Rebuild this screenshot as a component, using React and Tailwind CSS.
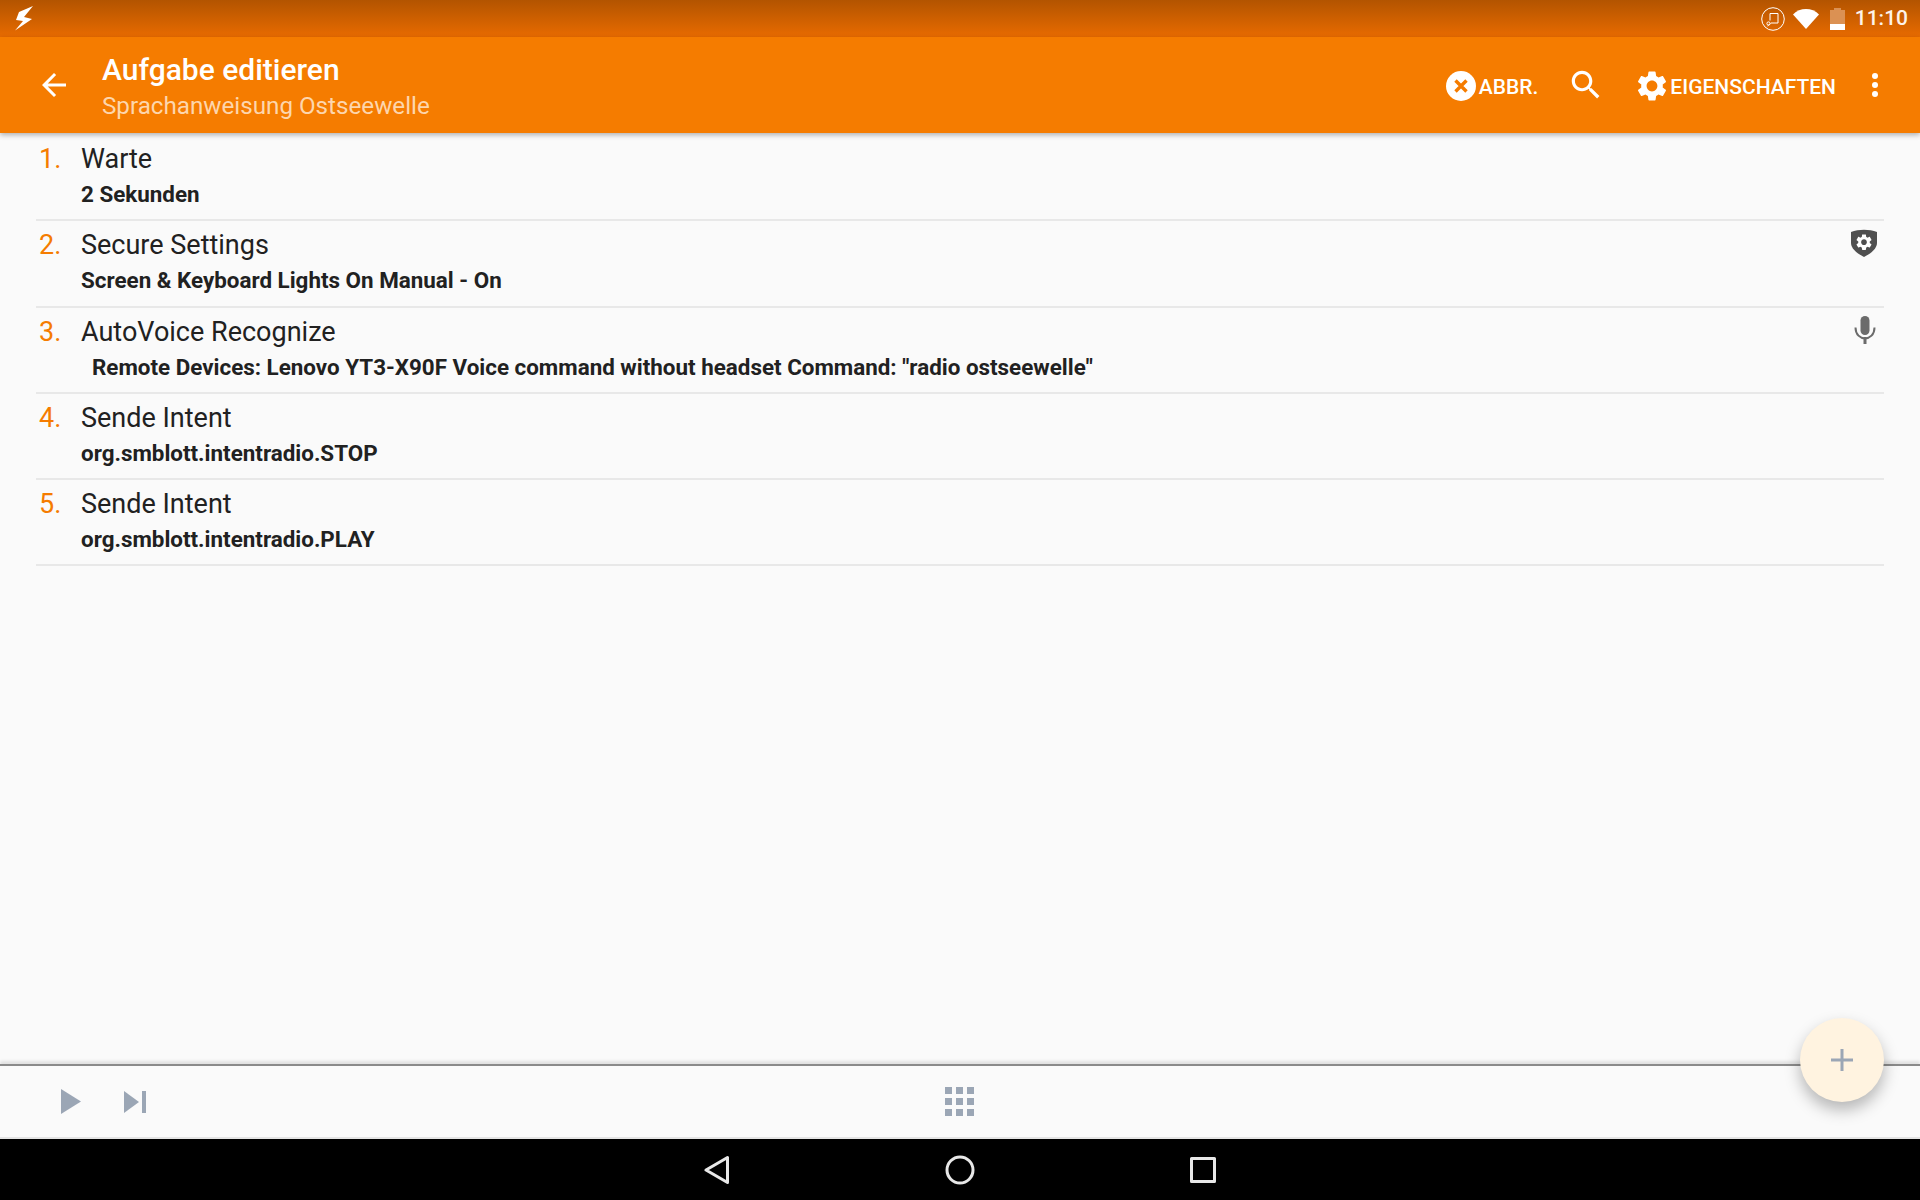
import React from 'react'

const actions = [
  { name: 'Warte', detail: '2 Sekunden' },
  { name: 'Secure Settings', detail: 'Screen & Keyboard Lights On Manual - On', icon: 'shield' },
  {
    name: 'AutoVoice Recognize',
    detail: 'Remote Devices: Lenovo YT3-X90F Voice command without headset Command: "radio ostseewelle"',
    indent: true,
    icon: 'mic',
  },
  { name: 'Sende Intent', detail: 'org.smblott.intentradio.STOP' },
  { name: 'Sende Intent', detail: 'org.smblott.intentradio.PLAY' },
]

const gearPath =
  'M19.14 12.94c.04-.3.06-.61.06-.94 0-.32-.02-.64-.07-.94l2.03-1.58c.18-.14.23-.41.12-.61l-1.92-3.32c-.12-.22-.37-.29-.59-.22l-2.39.96c-.5-.38-1.03-.7-1.62-.94l-.36-2.54c-.04-.24-.24-.41-.48-.41h-3.84c-.24 0-.43.17-.47.41l-.36 2.54c-.59.24-1.13.57-1.62.94l-2.39-.96c-.22-.08-.47 0-.59.22L2.74 8.87c-.12.21-.08.47.12.61l2.03 1.58c-.05.3-.09.63-.09.94s.02.64.07.94l-2.03 1.58c-.18.14-.23.41-.12.61l1.92 3.32c.12.22.37.29.59.22l2.39-.96c.5.38 1.03.7 1.62.94l.36 2.54c.05.24.24.41.48.41h3.84c.24 0 .44-.17.47-.41l.36-2.54c.59-.24 1.13-.56 1.62-.94l2.39.96c.22.08.47 0 .59-.22l1.92-3.32c.12-.22.07-.47-.12-.61l-2.01-1.58zM12 15.6c-1.98 0-3.6-1.62-3.6-3.6s1.62-3.6 3.6-3.6 3.6 1.62 3.6 3.6-1.62 3.6-3.6 3.6z'

function StatusBar() {
  return (
    <div className="h-[37px] shrink-0 flex items-center bg-gradient-to-b from-[#b35400] to-[#e86b00] pl-[15px] pr-[12px]">
      <svg width="18" height="25" viewBox="0 0 18 25" fill="#fff">
        <path d="M18 0 L4 6 L1 14 L8 15 L0 24.5 L17 13 L9 11 Z" />
      </svg>
      <div className="ml-auto flex items-center">
        <svg width="24" height="24" viewBox="0 0 24 24" fill="none" stroke="#fff" strokeWidth="1">
          <circle cx="12" cy="12" r="11.3" />
          <path d="M9 6.5h8v9.5h-7M9 6.5v7M9.5 16.5l-3 2.5" />
          <circle cx="7.5" cy="16.5" r="1.6" />
        </svg>
        <svg className="ml-[8px]" width="26" height="20" viewBox="0 0 26 20" fill="#fff">
          <path d="M0 5.5 C7 -1.8 19 -1.8 26 5.5 L13 20 Z" />
        </svg>
        <div className="ml-[11px] w-[15px] h-[22px] flex flex-col items-center">
          <div className="w-[7px] h-[2px] bg-[#db9153]" />
          <div className="w-[15px] flex-1 bg-[#db9153]" />
          <div className="w-[15px] h-[6px] bg-white" />
        </div>
        <span className="ml-[10px] text-[21px] font-medium text-[#fdf3ea] leading-none">11:10</span>
      </div>
    </div>
  )
}

function Toolbar() {
  return (
    <div className="relative z-10 h-[96px] shrink-0 flex items-center bg-[#f57c00] text-white shadow-[0_2px_5px_rgba(0,0,0,0.3)]">
      <svg className="ml-[36px] shrink-0" width="36" height="36" viewBox="0 0 24 24" fill="#fff">
        <path d="M20 11H7.83l5.59-5.59L12 4l-8 8 8 8 1.41-1.41L7.83 13H20v-2z" />
      </svg>
      <div className="ml-[30px] flex flex-col">
        <span className="text-[30px] font-medium leading-[42px]">Aufgabe editieren</span>
        <span className="text-[24.2px] leading-[30px] text-[#fdd6ad]">Sprachanweisung Ostseewelle</span>
      </div>
      <div className="ml-auto flex items-center">
        <svg className="mt-[2px]" width="30" height="30" viewBox="0 0 30 30">
          <circle cx="15" cy="15" r="15" fill="#fff" />
          <path d="M9.5 9.5l11 11M20.5 9.5l-11 11" stroke="#f57c00" strokeWidth="3.4" />
        </svg>
        <span className="ml-[3px] mt-[5px] text-[21px] font-medium">ABBR.</span>
        <svg className="ml-[29px]" width="38" height="38" viewBox="0 0 24 24" fill="#fff">
          <path d="M15.5 14h-.79l-.28-.27C15.41 12.59 16 11.11 16 9.5 16 5.91 13.09 3 9.5 3S3 5.91 3 9.5 5.91 16 9.5 16c1.61 0 3.09-.59 4.23-1.57l.27.28v.79l5 4.99L20.49 19l-4.99-5zm-6 0C7.01 14 5 11.99 5 9.5S7.01 5 9.5 5 14 7.01 14 9.5 11.99 14 9.5 14z" />
        </svg>
        <svg className="ml-[29px] mt-[1px]" width="36" height="36" viewBox="0 0 24 24" fill="#fff">
          <path d={gearPath} />
        </svg>
        <span className="mt-[5px] text-[21px] font-medium">EIGENSCHAFTEN</span>
        <svg className="ml-[21px] mr-[27px]" width="36" height="36" viewBox="0 0 24 24" fill="#fff">
          <circle cx="12" cy="6" r="2" />
          <circle cx="12" cy="12" r="2" />
          <circle cx="12" cy="18" r="2" />
        </svg>
      </div>
    </div>
  )
}

function ActionIcon({ type }) {
  if (type === 'shield') {
    return (
      <svg width="28" height="28" viewBox="0 0 28 28">
        <path d="M1 3 C9 0 19 0 27 3 L27 14 C27 20 20 25 14 28 C8 25 1 20 1 14 Z" fill="#4f4f4f" />
        <g transform="translate(4.4 3.6) scale(0.8)">
          <path d={gearPath} fill="#fff" />
        </g>
      </svg>
    )
  }
  return (
    <svg width="24" height="28" viewBox="0 0 24 28" fill="#6b6b6b">
      <rect x="7.5" y="0" width="9" height="19" rx="4.5" />
      <path d="M2.5 11.5 C2.5 26 21.5 26 21.5 11.5" fill="none" stroke="#6b6b6b" strokeWidth="2" />
      <rect x="10.5" y="21" width="3" height="7" />
    </svg>
  )
}

function ActionRow({ index, action }) {
  return (
    <div className="relative h-[86.25px] border-b-2 border-[#e8e8e8] flex">
      <span className="w-[45px] pl-[3px] pt-[5px] text-[27px] leading-[38px] text-[#f57c00]">{index}.</span>
      <div className="flex flex-col">
        <span className="pt-[5px] text-[27px] leading-[38px] text-[#212121]">{action.name}</span>
        <span className={`pt-[1px] text-[22.4px] font-bold leading-[31px] text-[#212121] ${action.indent ? 'ml-[11px]' : ''}`}>
          {action.detail}
        </span>
      </div>
      {action.icon && (
        <div className={`ml-auto pt-[8px] ${action.icon === 'mic' ? 'mr-[7px]' : 'mr-[6px]'}`}>
          <ActionIcon type={action.icon} />
        </div>
      )}
    </div>
  )
}

function BottomBar() {
  return (
    <div className="h-[75px] shrink-0 flex items-center relative bg-[#fafafa] border-t-2 border-[#8a8a8a] border-b-2 border-b-[#e4e4e4] shadow-[0_-3px_3px_rgba(0,0,0,0.1)]">
      <svg className="ml-[61px]" width="20" height="25" viewBox="0 0 20 25" fill="#9ba6b5">
        <path d="M0 0 L20 12.5 L0 25 Z" />
      </svg>
      <svg className="ml-[43px]" width="22" height="22" viewBox="0 0 22 22" fill="#9ba6b5">
        <path d="M0 0 L15 11 L0 22 Z" />
        <rect x="18" y="0" width="4" height="22" />
      </svg>
      <div className="absolute left-[945px] top-[21px] grid grid-cols-3 gap-[4px]">
        {Array.from({ length: 9 }).map((_, i) => (
          <div key={i} className="w-[7px] h-[7px] bg-[#9ba6b5]" />
        ))}
      </div>
    </div>
  )
}

function NavBar() {
  return (
    <div className="h-[61px] shrink-0 bg-black flex items-center justify-center">
      <svg width="26" height="30" viewBox="0 0 26 30" fill="none" stroke="#e8e8e8" strokeWidth="3" strokeLinejoin="round">
        <path d="M2 15 L23.5 2.5 L23.5 27.5 Z" />
      </svg>
      <svg className="ml-[215px]" width="30" height="30" viewBox="0 0 30 30" fill="none" stroke="#e8e8e8" strokeWidth="3">
        <circle cx="15" cy="15" r="13" />
      </svg>
      <svg className="ml-[215px]" width="26" height="26" viewBox="0 0 26 26" fill="none" stroke="#e8e8e8" strokeWidth="3" strokeLinejoin="round">
        <rect x="1.5" y="1.5" width="23" height="23" />
      </svg>
    </div>
  )
}

export default function App() {
  return (
    <div className="relative w-[1920px] h-[1200px] overflow-hidden flex flex-col bg-[#fafafa] font-['Roboto',sans-serif]">
      <StatusBar />
      <Toolbar />
      <div className="flex-1 px-[36px] pt-[2px]">
        {actions.map((action, i) => (
          <ActionRow key={i} index={i + 1} action={action} />
        ))}
      </div>
      <BottomBar />
      <NavBar />
      <button className="absolute left-[1800px] top-[1018px] w-[84px] h-[84px] rounded-full bg-[#fff3e0] flex items-center justify-center shadow-[0_8px_16px_rgba(0,0,0,0.28)]">
        <svg width="22" height="22" viewBox="0 0 22 22" fill="#9ba6b5">
          <rect x="0" y="9.5" width="22" height="3" />
          <rect x="9.5" y="0" width="3" height="22" />
        </svg>
      </button>
    </div>
  )
}
